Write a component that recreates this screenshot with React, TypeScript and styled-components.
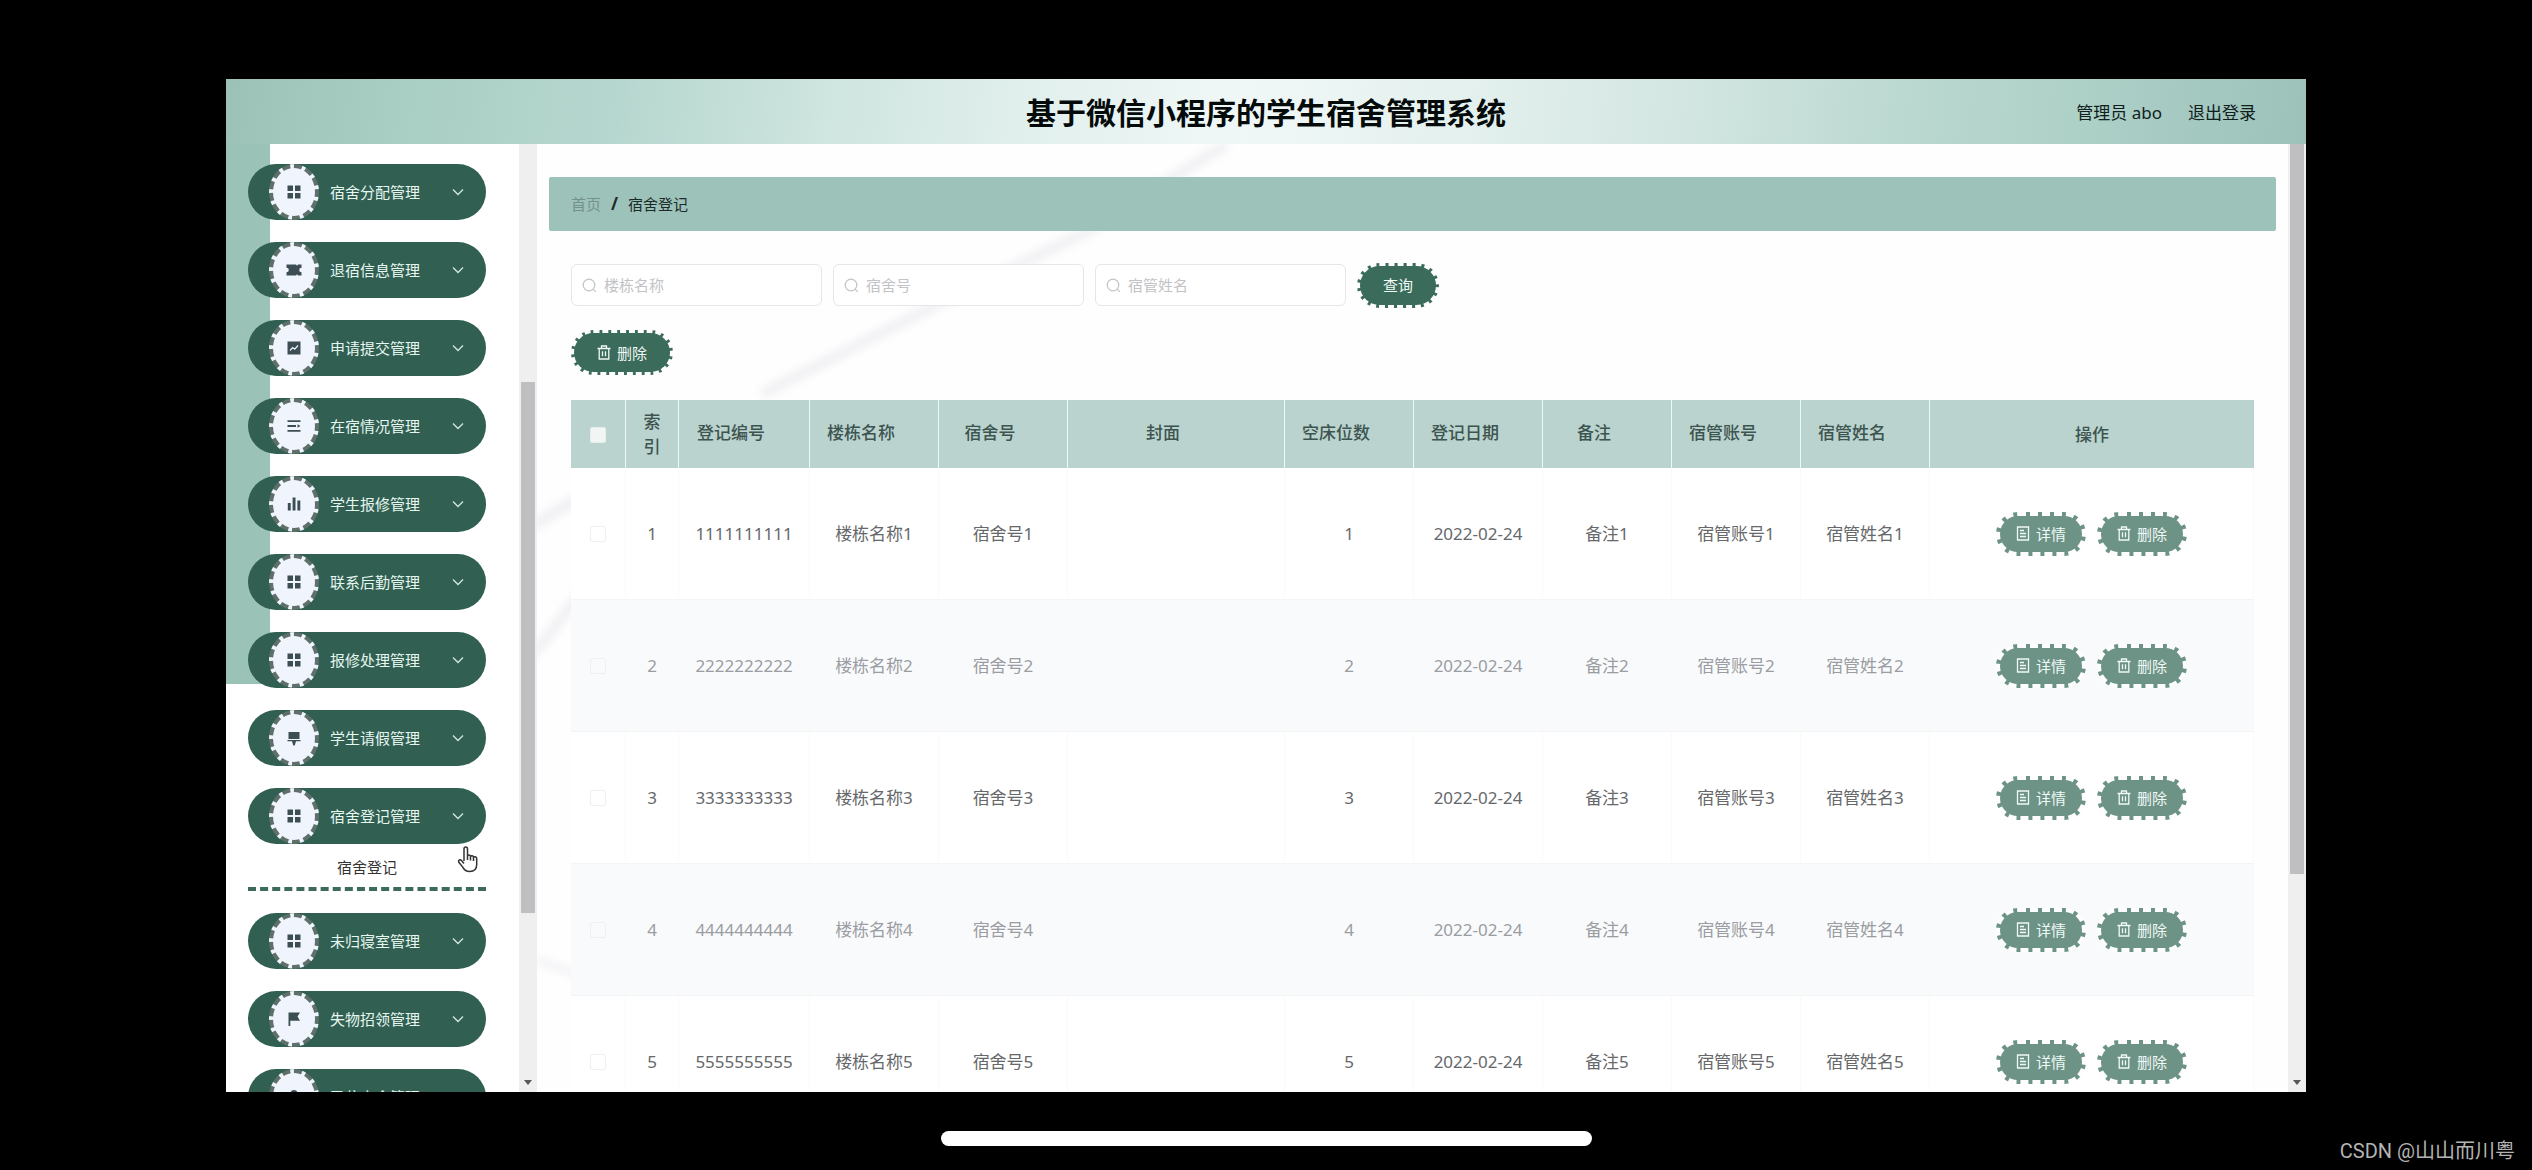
import React from "react";
import styled, { createGlobalStyle } from "styled-components";

const sans = `"Noto Sans", "Noto Sans CJK SC", sans-serif`;

const GlobalStyle = createGlobalStyle`
  *, *::before, *::after { box-sizing: border-box; }
  body { margin: 0; background: #000; font-family: ${sans}; }
  button, input { font-family: inherit; }
`;

const Stage = styled.div`
  display: flex;
  flex-direction: column;
  height: 100vh;
  padding-top: 79px;
  background: #000;
  overflow: hidden;
`;

const Frame = styled.div`
  flex: 1;
  min-height: 0;
  margin: 0 226px;
  display: flex;
  flex-direction: column;
  background: #fff;
  overflow: hidden;
`;

const Header = styled.header`
  flex: none;
  display: grid;
  grid-template-columns: 1fr auto 1fr;
  align-items: center;
  height: 65px;
  padding: 2px 50px 0;
  background: linear-gradient(
    97deg,
    #9cc2b7 0%,
    #a9cec4 9%,
    #b6d7cf 19%,
    #cfe5df 29%,
    #e2f0ed 39%,
    #f0f8f7 49%,
    #e3f0ed 60%,
    #d3e6e1 70%,
    #bcd9d1 80%,
    #add0c7 89%,
    #9cc2b9 100%
  );
`;

const Title = styled.h1`
  grid-column: 2;
  margin: 0;
  font-size: 30px;
  line-height: 40px;
  font-weight: 700;
  color: #050a0a;
`;

const Account = styled.div`
  display: flex;
  justify-content: flex-end;
  gap: 26px;
  font-size: 17px;
  line-height: 24px;
  color: #10201c;
`;

const Logout = styled.a`
  color: inherit;
  text-decoration: none;
`;

const Body = styled.div`
  flex: 1;
  min-height: 0;
  display: flex;
`;

const Sidebar = styled.aside`
  position: relative;
  flex: none;
  display: flex;
  width: 311px;
  background: #fff linear-gradient(#9bc2b7, #9bc2b7) 0 0 / 44px 57% no-repeat;
`;

const Menu = styled.nav`
  flex: 1;
  display: flex;
  flex-direction: column;
  gap: 22px;
  padding: 20px 33px 0 22px;
  overflow: hidden;
`;

const MenuGroup = styled.div`
  flex: none;
`;

const MenuButton = styled.button`
  display: flex;
  align-items: center;
  width: 100%;
  height: 56px;
  padding: 0 22px 0 21px;
  border: 0;
  border-radius: 28px;
  background: #315f52;
  color: #e6f7f0;
  font-size: 15px;
  line-height: 20px;
  cursor: pointer;
`;

const MenuIcon = styled.span`
  flex: none;
  display: grid;
  place-items: center;
  width: 50px;
  height: 56px;
  margin-right: 11px;
  border: 4px dashed #5f6f6a;
  border-radius: 50%;
  background: #f0f5fd;
  color: #3c4d54;
`;

const MenuLabel = styled.span`
  flex: 1;
  text-align: left;
`;

const SubLink = styled.a`
  display: block;
  height: 47px;
  border-bottom: 4px dashed #3c6a5b;
  color: #333;
  font-size: 15px;
  line-height: 47px;
  text-align: center;
  text-decoration: none;
`;

const Pointer = styled.svg`
  position: absolute;
  left: 231px;
  top: 702px;
`;

const Scrollbar = styled.div`
  flex: none;
  display: flex;
  flex-direction: column;
  align-items: center;
  width: 18px;
  background: #efeff0;
`;

const Thumb = styled.div<{ $before: number; $size: number }>`
  flex: none;
  width: 14px;
  height: ${(p) => p.$size}%;
  margin-top: ${(p) => p.$before}px;
  background: #bfbfc1;
`;

const TrackRest = styled.div`
  flex: 1;
  display: flex;
  align-items: flex-end;
  padding-bottom: 7px;
`;

const Main = styled.main`
  position: relative;
  flex: 1;
  min-width: 0;
  padding: 33px 12px 0;
  overflow: hidden;
  background: #fefefe;
`;

const Marble = styled.svg`
  position: absolute;
  left: 0;
  top: 0;
`;

const Breadcrumb = styled.nav`
  position: relative;
  display: flex;
  align-items: center;
  gap: 10px;
  height: 54px;
  padding: 0 22px;
  border-radius: 2px;
  background: #9dc2ba;
  font-size: 15px;
  line-height: 20px;
  color: #1c2b28;
`;

const Home = styled.a`
  color: #74918b;
  text-decoration: none;
`;

const Slash = styled.span`
  font-size: 17px;
  font-weight: 700;
`;

const Panel = styled.section`
  position: relative;
  padding: 32px 22px 0;
`;

const SearchForm = styled.form`
  display: flex;
  align-items: center;
  gap: 11px;
  height: 44px;
`;

const Field = styled.label`
  display: flex;
  align-items: center;
  gap: 7px;
  width: 251px;
  height: 42px;
  padding: 0 10px;
  border: 1px solid #e6e6e9;
  border-radius: 6px;
  background: #fff;
  color: #c2c3c6;
`;

const FieldInput = styled.input`
  flex: 1;
  min-width: 0;
  border: 0;
  padding: 0;
  outline: 0;
  background: transparent;
  font-size: 15px;
  line-height: 20px;
  color: #555;
  &::placeholder { color: #c2c3c6; opacity: 1; }
`;

const Action = styled.button<{ $width: number; $soft?: boolean }>`
  display: inline-flex;
  align-items: center;
  justify-content: center;
  gap: 6px;
  width: ${(p) => p.$width}px;
  height: ${(p) => (p.$soft ? 44 : 45)}px;
  padding: 0;
  border: ${(p) => (p.$soft ? 4 : 3)}px dashed #fdfdfe;
  border-radius: 23px;
  background: ${(p) => (p.$soft ? "#6d9386" : "#3b6b5a")};
  color: #f0faf6;
  font-size: 15px;
  line-height: 20px;
  cursor: pointer;
`;

const Toolbar = styled.div`
  display: flex;
  padding: 23px 0 25px;
`;

const Table = styled.table`
  width: 100%;
  table-layout: fixed;
  border-collapse: separate;
  border-spacing: 0;
  font-size: 17px;
  line-height: 25px;
  text-align: center;
`;

const Col = styled.col<{ $width?: number }>`
  width: ${(p) => (p.$width ? `${p.$width}px` : "auto")};
`;

const HeadCell = styled.th<{ $sortable?: boolean }>`
  height: 68px;
  padding: ${(p) => (p.$sortable ? "0 26px 4px 0" : "0 16px")};
  border-right: 1px solid #edf7f4;
  background: #bad3ce;
  color: #3d5450;
  font-weight: 500;
  &:last-child { border-right: 0; }
`;

const Row = styled.tr<{ $striped: boolean }>`
  height: 132px;
  background: ${(p) => (p.$striped ? "#f9fafc" : "#fff")};
  color: ${(p) => (p.$striped ? "#9a9da1" : "#66686a")};
`;

const Cell = styled.td`
  padding: 0;
  border-bottom: 1px solid #f3f4f6;
  border-right: 1px solid #fafafb;
`;

const Tick = styled.input<{ $head?: boolean }>`
  appearance: none;
  display: block;
  width: 16px;
  height: 16px;
  margin: ${(p) => (p.$head ? "2px auto 0" : "0 auto")};
  border: 1px solid ${(p) => (p.$head ? "#e6efed" : "#f0f0f2")};
  border-radius: 2px;
  background: ${(p) => (p.$head ? "#f1f5f4" : "transparent")};
`;

const RowActions = styled.div`
  display: flex;
  justify-content: center;
  gap: 11px;
`;

const Footer = styled.footer`
  flex: none;
  display: grid;
  grid-template-columns: 1fr auto 1fr;
  align-items: end;
  height: 78px;
`;

const HomeBar = styled.div`
  grid-column: 2;
  width: 651px;
  max-width: 50vw;
  height: 15px;
  margin-bottom: 24px;
  border-radius: 8px;
  background: #fff;
`;

const Watermark = styled.div`
  justify-self: end;
  margin: 0 17px 7px 0;
  font-family: Roboto, "Noto Sans CJK SC", sans-serif;
  font-size: 20px;
  line-height: 24px;
  color: #b4b4b4;
`;

type IconName = "grid" | "ticket" | "trend" | "list" | "bars" | "board" | "flag" | "user";

const Glyph = ({ name }: { name: IconName }) => (
  <svg width="16" height="16" viewBox="0 0 16 16" fill="currentColor" aria-hidden="true">
    {name === "grid" && <path d="M1.5 1.5h5.5v5.5h-5.5zM9 1.5h5.5v5.5h-5.5zM1.5 9h5.5v5.5h-5.5zM9 9h5.5v5.5h-5.5z" />}
    {name === "ticket" && <path d="M.5 2.500h9.500l1 1.300 1-1.300h3.500v3.200a2.300 2.300 0 0 0 0 4.600v3.200h-3.500l-1-1.300-1 1.300H.5v-3.200a2.300 2.300 0 0 0 0-4.600z" />}
    {name === "trend" && (
      <>
        <path d="M1.500 1.500h13v13h-13z" />
        <path d="M4 10.500l2.700-3 2 1.700L12 5.500" fill="none" stroke="#f0f5fd" strokeWidth="1.200" />
      </>
    )}
    {name === "list" && <path d="M1.500 2.200h13v1.900h-13zM1.500 7h8.500v1.900h-8.500zM11.500 6.200l3 1.800-3 1.800zM1.500 11.900h13v1.900h-13z" />}
    {name === "bars" && <path d="M1.800 7h2.900v7.500h-2.900zM6.600 1.500h2.900v13h-2.900zM11.400 4.500h2.900v10h-2.900z" />}
    {name === "board" && <path d="M2.500 2h11v7h-11zM1.500 10h13v1.300h-4.500L8.700 15.500H7.300L6 11.300H1.500z" />}
    {name === "flag" && <path d="M2.500 1.500h11.500l-2.500 4 2.500 4.300H4.300v5.200H2.500z" />}
    {name === "user" && <path d="M8 1a3.500 3.500 0 1 1 0 7 3.500 3.500 0 0 1 0-7zM1.500 15c0-4 3-6 6.500-6s6.500 2 6.500 6z" />}
  </svg>
);

const Chevron = () => (
  <svg width="12" height="8" viewBox="0 0 12 8" fill="none" stroke="#cfe6de" strokeWidth="1.400" aria-hidden="true">
    <path d="M1 1.500l5 5 5-5" />
  </svg>
);

const SearchIcon = () => (
  <svg width="15" height="15" viewBox="0 0 15 15" fill="none" stroke="currentColor" strokeWidth="1.200" aria-hidden="true">
    <circle cx="7" cy="7" r="5.800" />
    <path d="M11.200 11.200l2.600 2.600" />
  </svg>
);

const TrashIcon = () => (
  <svg width="14" height="15" viewBox="0 0 14 15" fill="none" stroke="currentColor" strokeWidth="1.300" aria-hidden="true">
    <path d="M.5 3.500h13M4.500 3.500v-2.500h5v2.500M2.200 3.500v10.500h9.600V3.500M5.500 6.200v5M8.500 6.200v5" />
  </svg>
);

const DocIcon = () => (
  <svg width="14" height="15" viewBox="0 0 14 15" fill="none" stroke="currentColor" strokeWidth="1.300" aria-hidden="true">
    <path d="M1.500 1h11v13h-11zM4 4.500h4M4 7.500h6M4 10.500h6" />
  </svg>
);

const DownArrow = () => (
  <svg width="8" height="5" viewBox="0 0 8 5" fill="#55575a" aria-hidden="true">
    <path d="M0 0h8L4 5z" />
  </svg>
);

const menu: { label: string; icon: IconName; child?: string }[] = [
  { label: "宿舍分配管理", icon: "grid" },
  { label: "退宿信息管理", icon: "ticket" },
  { label: "申请提交管理", icon: "trend" },
  { label: "在宿情况管理", icon: "list" },
  { label: "学生报修管理", icon: "bars" },
  { label: "联系后勤管理", icon: "grid" },
  { label: "报修处理管理", icon: "grid" },
  { label: "学生请假管理", icon: "board" },
  { label: "宿舍登记管理", icon: "grid", child: "宿舍登记" },
  { label: "未归寝室管理", icon: "grid" },
  { label: "失物招领管理", icon: "flag" },
  { label: "已住宿舍管理", icon: "user" },
];

const columns = [
  { title: "登记编号", width: 131 },
  { title: "楼栋名称", width: 129 },
  { title: "宿舍号", width: 129 },
  { title: "封面", width: 217 },
  { title: "空床位数", width: 129 },
  { title: "登记日期", width: 129 },
  { title: "备注", width: 129 },
  { title: "宿管账号", width: 129 },
  { title: "宿管姓名", width: 129 },
];

const rows = [1, 2, 3, 4, 5].map((n) => ({
  n,
  cells: [
    String(n).repeat(10),
    `楼栋名称${n}`,
    `宿舍号${n}`,
    "",
    String(n),
    "2022-02-24",
    `备注${n}`,
    `宿管账号${n}`,
    `宿管姓名${n}`,
  ],
}));

export default function App() {
  return (
    <Stage>
      <GlobalStyle />
      <Frame>
        <Header>
          <Title>基于微信小程序的学生宿舍管理系统</Title>
          <Account>
            <span>管理员 abo</span>
            <Logout href="#logout">退出登录</Logout>
          </Account>
        </Header>
        <Body>
          <Sidebar>
            <Menu>
              {menu.map((item) => (
                <MenuGroup key={item.label}>
                  <MenuButton type="button">
                    <MenuIcon>
                      <Glyph name={item.icon} />
                    </MenuIcon>
                    <MenuLabel>{item.label}</MenuLabel>
                    <Chevron />
                  </MenuButton>
                  {item.child && <SubLink href="#register">{item.child}</SubLink>}
                </MenuGroup>
              ))}
            </Menu>
            <Scrollbar>
              <Thumb $before={238} $size={56} />
              <TrackRest>
                <DownArrow />
              </TrackRest>
            </Scrollbar>
            <Pointer width="22" height="27" viewBox="0 0 22 27" fill="#fff" stroke="#333" strokeWidth="1.500" aria-hidden="true">
              <path d="M7 15V3c0-2.600 3.500-2.600 3.500 0v7c.5-1.600 3-1.400 3 .6.600-1.400 3-1.100 3 .8.800-1.200 3.200-.9 3.200 1.200v6c0 4.500-2.800 7-7 7-3.700 0-5.500-1.700-7-4.500L1.700 16c-.8-2 1.500-2.900 2.800-1.400L7 17.500M10.500 9v5M13.500 10.500v4M16.500 11.500v3.500" />
            </Pointer>
          </Sidebar>
          <Main>
            <Marble width="720" height="860" viewBox="0 0 720 860" fill="none" aria-hidden="true">
              <defs>
                <filter id="soften" x="-20%" y="-20%" width="140%" height="140%">
                  <feGaussianBlur stdDeviation="5" />
                </filter>
              </defs>
              <g filter="url(#soften)" stroke="#eeeef2">
                <path d="M225 250L405 158L545 90L690 0" strokeWidth="9" />
                <path d="M-5 382L45 352" strokeWidth="10" />
                <path d="M-5 512L45 448" strokeWidth="9" />
                <path d="M0 816L45 832" strokeWidth="6" />
              </g>
            </Marble>
            <Breadcrumb aria-label="breadcrumb">
              <Home href="#home">首页</Home>
              <Slash>/</Slash>
              <span>宿舍登记</span>
            </Breadcrumb>
            <Panel>
              <SearchForm>
                {["楼栋名称", "宿舍号", "宿管姓名"].map((name) => (
                  <Field key={name}>
                    <SearchIcon />
                    <FieldInput type="text" placeholder={name} aria-label={name} />
                  </Field>
                ))}
                <Action type="button" $width={82}>
                  查询
                </Action>
              </SearchForm>
              <Toolbar>
                <Action type="button" $width={102}>
                  <TrashIcon />
                  删除
                </Action>
              </Toolbar>
              <Table>
                <colgroup>
                  <Col $width={55} />
                  <Col $width={53} />
                  {columns.map((c) => (
                    <Col key={c.title} $width={c.width} />
                  ))}
                  <Col />
                </colgroup>
                <thead>
                  <tr>
                    <HeadCell>
                      <Tick type="checkbox" $head aria-label="全选" />
                    </HeadCell>
                    <HeadCell>索引</HeadCell>
                    {columns.map((c) => (
                      <HeadCell key={c.title} $sortable>
                        {c.title}
                      </HeadCell>
                    ))}
                    <HeadCell>操作</HeadCell>
                  </tr>
                </thead>
                <tbody>
                  {rows.map((row) => (
                    <Row key={row.n} $striped={row.n % 2 === 0}>
                      <Cell>
                        <Tick type="checkbox" aria-label={`选择 ${row.n}`} />
                      </Cell>
                      <Cell>{row.n}</Cell>
                      {row.cells.map((text, i) => (
                        <Cell key={columns[i].title}>{text}</Cell>
                      ))}
                      <Cell>
                        <RowActions>
                          <Action type="button" $width={90} $soft>
                            <DocIcon />
                            详情
                          </Action>
                          <Action type="button" $width={90} $soft>
                            <TrashIcon />
                            删除
                          </Action>
                        </RowActions>
                      </Cell>
                    </Row>
                  ))}
                </tbody>
              </Table>
            </Panel>
          </Main>
          <Scrollbar>
            <Thumb $before={0} $size={77} />
            <TrackRest>
              <DownArrow />
            </TrackRest>
          </Scrollbar>
        </Body>
      </Frame>
      <Footer>
        <HomeBar />
        <Watermark>CSDN @山山而川粤</Watermark>
      </Footer>
    </Stage>
  );
}
